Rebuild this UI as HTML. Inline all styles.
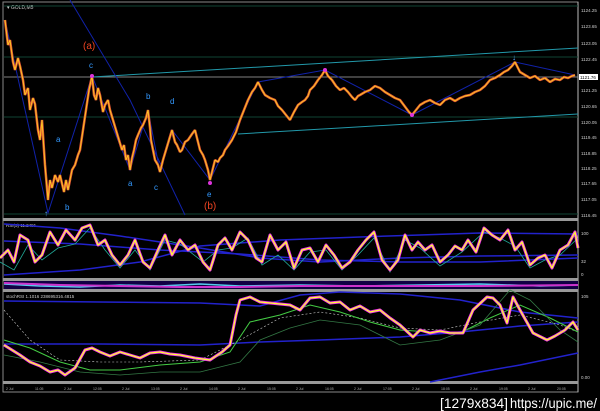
<!DOCTYPE html>
<html><head><meta charset="utf-8"><style>
html,body{margin:0;padding:0;background:#000;width:600px;height:411px;overflow:hidden}
svg{display:block}
text{font-family:"Liberation Sans",sans-serif}
</style></head><body>
<svg width="600" height="411" viewBox="0 0 600 411" xmlns="http://www.w3.org/2000/svg">
<rect width="600" height="411" fill="#000"/>
<rect x="3" y="2" width="575" height="390" fill="none" stroke="#888" stroke-width="1"/>
<line x1="578" y1="2" x2="578" y2="392" stroke="#bbb"/>
<rect x="3" y="218" width="575" height="3" fill="#999"/>
<rect x="3" y="278" width="575" height="3" fill="#999"/>
<rect x="3" y="289" width="575" height="3" fill="#999"/>
<rect x="3" y="381" width="575" height="3" fill="#999"/>
<text x="7" y="9" fill="#ccc" font-size="5">▾ GOLD,M5</text>
<line x1="4" y1="6" x2="578" y2="6" stroke="#143" />
<line x1="4" y1="57" x2="578" y2="57" stroke="#143"/>
<line x1="4" y1="117" x2="578" y2="117" stroke="#143"/>
<line x1="4" y1="214" x2="578" y2="214" stroke="#143"/>
<line x1="4" y1="77" x2="578" y2="77" stroke="#aaa" stroke-width="0.7"/>
<line x1="92" y1="77" x2="578" y2="48" stroke="#29a" stroke-width="1"/>
<line x1="238" y1="134" x2="578" y2="114" stroke="#29a" stroke-width="1"/>
<polyline fill="none" stroke="#12a" stroke-width="1" points="5,20 48,213 92,76 130,170 148,110 160,172 172,130 210,180 258,82 325,70 412,115 515,62 575,75"/>
<polyline fill="none" stroke="#12a" stroke-width="1" points="70,0 130,100 185,215"/>
<polyline fill="none" stroke="#d53" stroke-width="2.5" stroke-linejoin="bevel" points="5,20 8,45 10,40 13,62 15,70 18,58 20,66 23,80 25,95 28,88 30,110 33,98 35,104 38,130 40,140 42,120 45,165 48,200 50,180 52,188 55,175 58,182 60,175 64,192 66,180 68,190 72,170 75,165 78,155 80,150 83,130 86,110 89,90 92,76 94,95 96,100 98,88 100,95 103,112 105,105 108,100 110,110 113,120 116,130 119,140 122,150 124,145 126,160 128,155 130,170 132,158 134,150 136,140 138,135 141,128 143,125 146,118 148,110 150,128 151,140 153,150 155,160 158,165 160,172 163,160 166,150 169,140 172,130 175,142 177,145 180,152 182,150 185,142 188,140 192,134 195,130 198,142 200,150 203,155 205,160 208,170 210,180 213,168 215,160 218,162 220,158 223,155 225,150 228,146 232,140 236,132 240,120 244,110 248,100 252,92 255,88 258,82 262,90 265,95 270,98 275,100 278,106 282,110 286,115 290,120 294,112 298,105 302,102 305,100 308,96 310,90 314,86 318,80 322,75 325,70 328,76 332,80 336,86 340,90 344,88 348,92 352,97 355,100 358,96 360,95 365,92 370,90 375,86 380,88 385,92 390,95 395,98 400,100 403,104 406,108 409,112 412,115 416,110 420,105 425,102 430,100 435,103 440,105 445,100 450,98 455,101 460,98 465,96 470,95 475,92 480,90 485,86 490,80 495,78 500,75 504,72 508,70 512,66 515,62 518,68 520,72 525,75 530,78 535,76 540,80 545,78 550,82 555,79 560,80 564,77 568,78 572,76 575,75"/>
<polyline fill="none" stroke="#fc2" stroke-width="0.9" stroke-linejoin="bevel" points="5,20 8,45 10,40 13,62 15,70 18,58 20,66 23,80 25,95 28,88 30,110 33,98 35,104 38,130 40,140 42,120 45,165 48,200 50,180 52,188 55,175 58,182 60,175 64,192 66,180 68,190 72,170 75,165 78,155 80,150 83,130 86,110 89,90 92,76 94,95 96,100 98,88 100,95 103,112 105,105 108,100 110,110 113,120 116,130 119,140 122,150 124,145 126,160 128,155 130,170 132,158 134,150 136,140 138,135 141,128 143,125 146,118 148,110 150,128 151,140 153,150 155,160 158,165 160,172 163,160 166,150 169,140 172,130 175,142 177,145 180,152 182,150 185,142 188,140 192,134 195,130 198,142 200,150 203,155 205,160 208,170 210,180 213,168 215,160 218,162 220,158 223,155 225,150 228,146 232,140 236,132 240,120 244,110 248,100 252,92 255,88 258,82 262,90 265,95 270,98 275,100 278,106 282,110 286,115 290,120 294,112 298,105 302,102 305,100 308,96 310,90 314,86 318,80 322,75 325,70 328,76 332,80 336,86 340,90 344,88 348,92 352,97 355,100 358,96 360,95 365,92 370,90 375,86 380,88 385,92 390,95 395,98 400,100 403,104 406,108 409,112 412,115 416,110 420,105 425,102 430,100 435,103 440,105 445,100 450,98 455,101 460,98 465,96 470,95 475,92 480,90 485,86 490,80 495,78 500,75 504,72 508,70 512,66 515,62 518,68 520,72 525,75 530,78 535,76 540,80 545,78 550,82 555,79 560,80 564,77 568,78 572,76 575,75"/>
<circle cx="92" cy="76" r="2" fill="#d3d"/><circle cx="210" cy="183" r="2" fill="#d3d"/><circle cx="412" cy="115" r="2" fill="#d3d"/><circle cx="325" cy="70" r="2" fill="#d3d"/>
<text x="44" y="216" fill="#5af" font-size="8">↑</text><text x="512" y="60" fill="#5af" font-size="8">↓</text>
<g fill="#39f" font-size="8">
<text x="56" y="142">a</text><text x="65" y="210">b</text><text x="89" y="68">c</text><text x="146" y="99">b</text><text x="170" y="104">d</text><text x="128" y="186">a</text><text x="154" y="190">c</text><text x="207" y="197">e</text>
</g>
<text x="83" y="49" fill="#e42" font-size="10">(a)</text>
<text x="204" y="209" fill="#e42" font-size="10">(b)</text>
<g fill="#ccc" font-size="4.5">
<text x="581" y="12">1124.25</text><text x="581" y="28">1123.65</text><text x="581" y="45">1123.05</text><text x="581" y="61">1122.45</text><text x="581" y="92">1121.25</text><text x="581" y="108">1120.65</text><text x="581" y="124">1120.05</text><text x="581" y="139">1119.45</text><text x="581" y="155">1118.85</text><text x="581" y="170">1118.25</text><text x="581" y="185">1117.65</text><text x="581" y="201">1117.05</text><text x="581" y="217">1116.45</text>
<text x="581" y="235">100</text><text x="581" y="263">32</text><text x="581" y="276">0</text><text x="581" y="298">105</text><text x="581" y="379">0.00</text>
</g>
<rect x="579" y="74" width="19" height="6" fill="#fff"/><text x="580" y="79" fill="#000" font-size="4.5">1121.76</text>
<text x="6" y="227" fill="#ccc" font-size="4.5">RSI(5) 11.2491</text>
<polyline fill="none" stroke="#22c" stroke-width="1.5" points="4,224 60,228 120,236 200,248 260,258 320,262 400,258 480,256 578,255"/>
<polyline fill="none" stroke="#22c" stroke-width="1.5" points="4,241 80,244 160,250 240,254 320,260 400,262 480,262 578,258"/>
<polyline fill="none" stroke="#22c" stroke-width="1.5" points="4,275 80,270 140,262 200,246 280,240 360,237 420,235 480,233 578,234"/>
<polyline fill="none" stroke="#2a9" stroke-width="0.8" points="0,262 14,270 28,245 42,260 58,248 75,244 90,228 105,250 120,268 135,250 150,270 165,240 180,244 203,262 218,250 232,248 248,238 262,265 278,255 294,270 310,252 326,250 342,270 358,255 374,238 390,272 405,240 420,248 440,266 462,252 484,232 500,238 515,246 530,268 545,260 560,255 578,238"/>
<polyline fill="none" stroke="#e3e" stroke-width="3" stroke-linejoin="round" points="0,258 8,250 14,262 20,235 28,240 35,262 42,255 50,232 58,245 66,230 75,240 82,228 90,225 98,245 105,240 112,255 120,265 128,255 135,240 143,262 150,268 158,250 165,235 172,255 180,240 188,250 195,245 203,262 210,270 218,245 225,238 232,250 240,232 248,240 256,258 262,262 270,235 278,250 286,242 294,268 302,250 310,248 318,262 326,245 334,255 342,268 350,262 358,250 366,240 374,232 382,260 390,270 398,260 405,235 412,250 418,242 425,250 432,245 440,262 448,255 455,246 462,250 468,240 476,252 484,228 492,235 500,240 508,230 515,250 522,242 530,265 538,258 545,255 552,268 560,250 568,245 575,232 578,248"/>
<polyline fill="none" stroke="#ff3" stroke-width="1.3" stroke-linejoin="round" points="0,258 8,250 14,262 20,235 28,240 35,262 42,255 50,232 58,245 66,230 75,240 82,228 90,225 98,245 105,240 112,255 120,265 128,255 135,240 143,262 150,268 158,250 165,235 172,255 180,240 188,250 195,245 203,262 210,270 218,245 225,238 232,250 240,232 248,240 256,258 262,262 270,235 278,250 286,242 294,268 302,250 310,248 318,262 326,245 334,255 342,268 350,262 358,250 366,240 374,232 382,260 390,270 398,260 405,235 412,250 418,242 425,250 432,245 440,262 448,255 455,246 462,250 468,240 476,252 484,228 492,235 500,240 508,230 515,250 522,242 530,265 538,258 545,255 552,268 560,250 568,245 575,232 578,248"/>
<rect x="4" y="281" width="574" height="8" fill="#104"/>
<polyline fill="none" stroke="#5ce" stroke-width="1.5" points="4,284 40,286 80,287 120,285 160,286 200,284 240,286 300,285 360,286 420,285 480,284 540,286 578,285"/>
<polyline fill="none" stroke="#c3c" stroke-width="2" points="4,283 60,285 120,286 180,287 240,287 300,286 360,286 420,286 480,286 578,285"/>
<text x="6" y="298" fill="#ccc" font-size="4.5">stochRSI 1.1016 238695316.4815</text>
<polyline fill="none" stroke="#22c" stroke-width="1.5" points="4,301 100,302 200,303 260,306 300,295 340,292 400,294 460,300 520,312 578,318"/>
<polyline fill="none" stroke="#22c" stroke-width="1.5" points="4,344 100,344 200,345 260,342 320,340 400,337 460,332 520,326 578,322"/>
<polyline fill="none" stroke="#22c" stroke-width="1.5" points="430,382 480,372 520,365 578,353"/>
<polyline fill="none" stroke="#ccc" stroke-width="0.6" stroke-dasharray="2,2" points="4,310 30,340 60,360 100,362 140,362 200,360 240,340 280,318 320,312 360,318 400,328 440,330 480,322 520,315 560,325 578,332"/>
<polyline fill="none" stroke="#4c4" stroke-width="1" points="4,340 30,348 60,362 90,370 120,370 160,365 200,362 230,352 250,322 280,315 310,305 340,312 370,322 400,330 430,332 460,333 490,318 520,305 550,318 578,332"/>
<polyline fill="none" stroke="#374" stroke-width="0.8" points="4,355 40,362 80,372 120,375 160,372 200,372 240,362 260,340 290,328 320,320 360,325 400,345 440,340 480,325 510,290 530,300 560,330 578,342"/>
<polyline fill="none" stroke="#e3e" stroke-width="3" stroke-linejoin="round" points="4,345 12,350 20,355 30,362 40,366 50,372 58,370 65,375 75,368 85,350 92,348 100,352 110,356 120,352 130,355 140,358 150,353 160,352 170,354 180,355 195,358 210,360 222,352 230,345 236,315 240,300 250,297 260,302 270,303 280,304 290,305 300,310 310,298 320,297 330,303 340,302 350,310 360,306 370,312 380,310 390,318 400,325 413,337 420,330 430,333 440,331 450,333 463,333 473,310 487,297 493,298 500,305 507,323 513,297 520,310 533,333 547,340 555,336 565,330 573,322 578,330"/>
<polyline fill="none" stroke="#ff3" stroke-width="1.3" stroke-linejoin="round" points="4,345 12,350 20,355 30,362 40,366 50,372 58,370 65,375 75,368 85,350 92,348 100,352 110,356 120,352 130,355 140,358 150,353 160,352 170,354 180,355 195,358 210,360 222,352 230,345 236,315 240,300 250,297 260,302 270,303 280,304 290,305 300,310 310,298 320,297 330,303 340,302 350,310 360,306 370,312 380,310 390,318 400,325 413,337 420,330 430,333 440,331 450,333 463,333 473,310 487,297 493,298 500,305 507,323 513,297 520,310 533,333 547,340 555,336 565,330 573,322 578,330"/>
<g fill="#aaa" font-size="3.5">
<text x="6" y="390">2 Jul</text><text x="35" y="390">11:05</text><text x="64" y="390">2 Jul</text><text x="93" y="390">12:05</text><text x="122" y="390">2 Jul</text><text x="151" y="390">13:05</text><text x="180" y="390">2 Jul</text><text x="209" y="390">14:05</text><text x="238" y="390">2 Jul</text><text x="267" y="390">15:05</text><text x="296" y="390">2 Jul</text><text x="325" y="390">16:05</text><text x="354" y="390">2 Jul</text><text x="383" y="390">17:05</text><text x="412" y="390">2 Jul</text><text x="441" y="390">18:05</text><text x="470" y="390">2 Jul</text><text x="499" y="390">19:05</text><text x="528" y="390">2 Jul</text><text x="557" y="390">20:05</text>
</g>
<text x="440" y="408" fill="#fff" font-size="14" textLength="68" lengthAdjust="spacingAndGlyphs">[1279x834]</text>
<text x="510" y="408" fill="#fff" font-size="14" textLength="87" lengthAdjust="spacingAndGlyphs">https://upic.me/</text>
</svg>
</body></html>
